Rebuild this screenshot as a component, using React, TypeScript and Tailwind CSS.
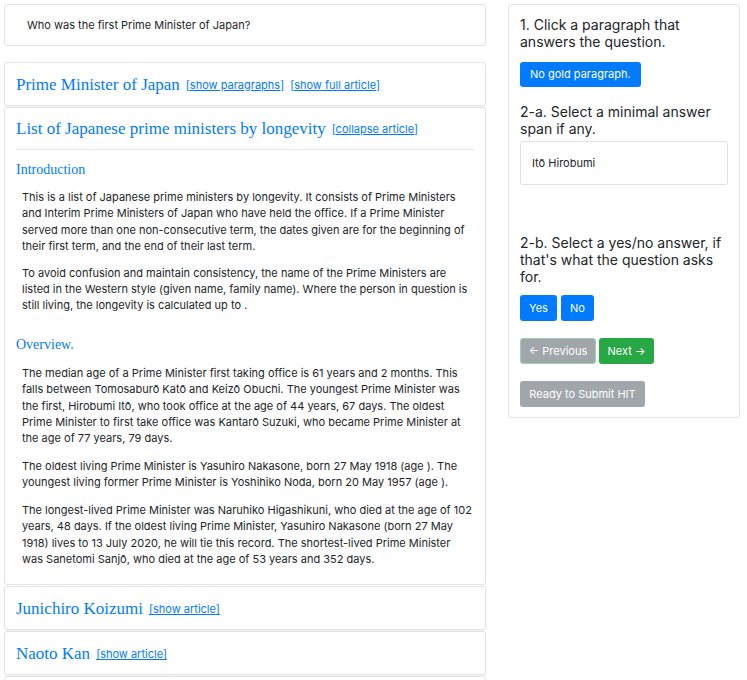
import React from "react";

const SANS = "font-['Inter','Liberation_Sans',Arial,sans-serif]";
const SERIF = "font-['Liberation_Serif','Times_New_Roman',serif]";

type Section = { heading: string; paragraphs: string[] };

const SECTIONS: Section[] = [
  {
    heading: "Introduction",
    paragraphs: [
      "This is a list of Japanese prime ministers by longevity. It consists of Prime Ministers and Interim Prime Ministers of Japan who have held the office. If a Prime Minister served more than one non-consecutive term, the dates given are for the beginning of their first term, and the end of their last term.",
      "To avoid confusion and maintain consistency, the name of the Prime Ministers are listed in the Western style (given name, family name). Where the person in question is still living, the longevity is calculated up to .",
    ],
  },
  {
    heading: "Overview.",
    paragraphs: [
      "The median age of a Prime Minister first taking office is 61 years and 2 months. This falls between Tomosaburō Katō and Keizō Obuchi. The youngest Prime Minister was the first, Hirobumi Itō, who took office at the age of 44 years, 67 days. The oldest Prime Minister to first take office was Kantarō Suzuki, who became Prime Minister at the age of 77 years, 79 days.",
      "The oldest living Prime Minister is Yasuhiro Nakasone, born 27 May 1918 (age ). The youngest living former Prime Minister is Yoshihiko Noda, born 20 May 1957 (age ).",
      "The longest-lived Prime Minister was Naruhiko Higashikuni, who died at the age of 102 years, 48 days. If the oldest living Prime Minister, Yasuhiro Nakasone (born 27 May 1918) lives to 13 July 2020, he will tie this record. The shortest-lived Prime Minister was Sanetomi Sanjō, who died at the age of 53 years and 352 days.",
    ],
  },
];

function ArticleLink({ children }: { children: React.ReactNode }) {
  return (
    <a className={`${SANS} text-[11px] text-[#007bff] underline ml-[6px] relative top-[1px]`} href="#">
      [{children}]
    </a>
  );
}

function CollapsedArticle({ title, links }: { title: string; links: string[] }) {
  return (
    <div className="bg-white border border-[#e3e3e3] rounded-[3px] px-[11px] h-[44px] flex items-center shadow-[0_1px_1px_rgba(0,0,0,0.04)]">
      <span className={`${SERIF} text-[17px] text-[#007bff] leading-none`}>{title}</span>
      {links.map((l) => (
        <ArticleLink key={l}>{l}</ArticleLink>
      ))}
    </div>
  );
}

export default function App() {
  return (
    <div className={`${SANS} bg-white w-[747px] h-[680px] overflow-hidden flex items-start gap-[22px] pl-[4px] pt-[4px] text-[#212529]`}>
      {/* Left column */}
      <div className="w-[482px] flex flex-col">
        <div className="border border-[#e3e3e3] rounded-[3px] h-[42px] pl-[22px] flex items-center text-[11px]">
          Who was the first Prime Minister of Japan?
        </div>

        <div className="mt-[16px] flex flex-col gap-[1px]">
          <CollapsedArticle title="Prime Minister of Japan" links={["show paragraphs", "show full article"]} />

          <div className="bg-white border border-[#e3e3e3] rounded-[3px] px-[11px] pt-[10px] pb-[17px]">
            <div className="flex items-center h-[20px]">
              <span className={`${SERIF} text-[17px] text-[#007bff] leading-none`}>
                List of Japanese prime ministers by longevity
              </span>
              <ArticleLink>collapse article</ArticleLink>
            </div>
            <div className="h-px bg-[#e5e5e5] mt-[11px]" />
            {SECTIONS.map((s, i) => (
              <div key={s.heading} className={i === 0 ? "mt-[12px]" : "mt-[23px]"}>
                <div className={`${SERIF} text-[14px] text-[#007bff] leading-[16px]`}>{s.heading}</div>
                <div className={`${i === 0 ? "mt-[11px] gap-[10px]" : "mt-[12px] gap-[11px]"} flex flex-col`}>
                  {s.paragraphs.map((p, j) => (
                    <p key={j} className="text-[11px] leading-[16.4px] pl-[6px] pr-[2px] text-[#212529]">
                      {p}
                    </p>
                  ))}
                </div>
              </div>
            ))}
          </div>

          <CollapsedArticle title="Junichiro Koizumi" links={["show article"]} />
          <CollapsedArticle title="Naoto Kan" links={["show article"]} />
          <div className="bg-white border border-[#e3e3e3] rounded-[3px] h-[44px]" />
        </div>
      </div>

      {/* Right panel */}
      <div className="w-[232px] border border-[#e3e3e3] rounded-[3px] px-[11px] pt-[11px] pb-[10px] flex flex-col">
        <h5 className="text-[14px] leading-[17px] text-[#212529]">
          1. Click a paragraph that answers the question.
        </h5>
        <button className="mt-[12px] self-start bg-[#007bff] text-white text-[11px] h-[25px] px-[10px] rounded-[3px]">
          No gold paragraph.
        </button>

        <h5 className="mt-[16px] text-[14px] leading-[17px]">2-a. Select a minimal answer span if any.</h5>
        <div className="mt-[4px] border border-[#e3e3e3] rounded-[3px] h-[44px] px-[11px] flex items-center text-[11px]">
          Itō Hirobumi
        </div>

        <h5 className="mt-[49px] text-[14px] leading-[17px]">
          2-b. Select a yes/no answer, if that's what the question asks for.
        </h5>
        <div className="mt-[10px] flex gap-[4px]">
          <button className="bg-[#007bff] text-white text-[11px] h-[26px] w-[37px] rounded-[3px]">Yes</button>
          <button className="bg-[#007bff] text-white text-[11px] h-[26px] w-[33px] rounded-[3px]">No</button>
        </div>

        <div className="mt-[17px] flex gap-[3px]">
          <button className="bg-[#a1a6ab] border border-[#9ed1aa] text-white text-[11px] h-[26px] w-[76px] rounded-[3px]">
            ← Previous
          </button>
          <button className="bg-[#28a745] text-white text-[11px] h-[26px] w-[55px] rounded-[3px]">Next →</button>
        </div>

        <button className="mt-[17px] self-start bg-[#a1a6ab] text-white text-[11px] h-[26px] w-[125px] rounded-[3px]">
          Ready to Submit HIT
        </button>
      </div>
    </div>
  );
}
